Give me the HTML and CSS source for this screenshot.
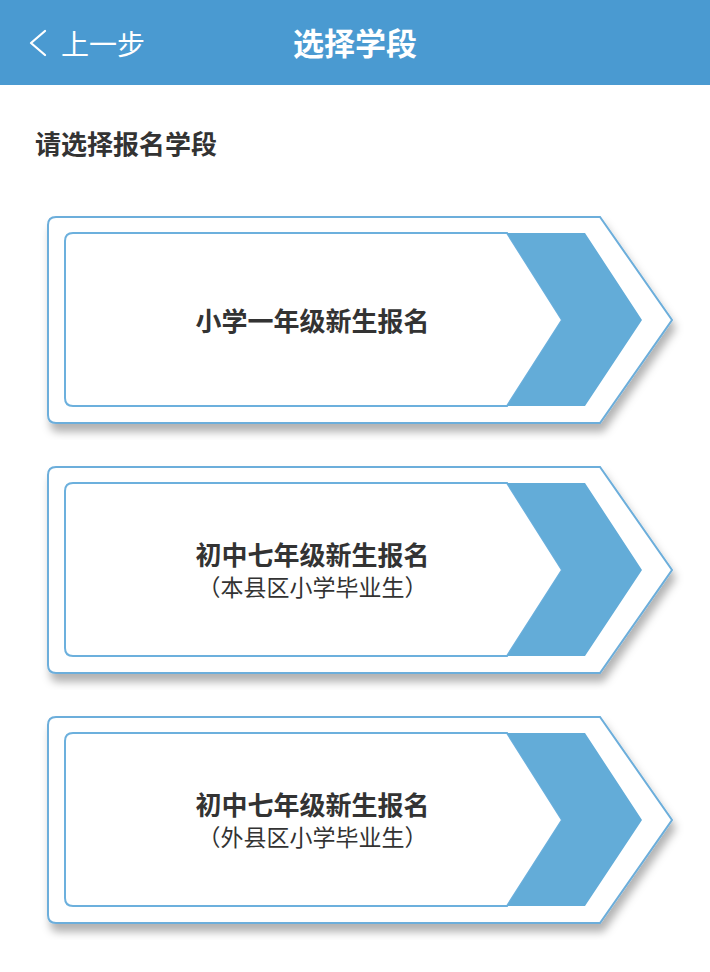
FILE: index.html
```html
<!DOCTYPE html>
<html lang="zh-CN">
<head>
<meta charset="utf-8">
<title>选择学段</title>
<link rel="stylesheet" href="styles.css">
</head>
<body>
<header class="topbar">
  <div class="back">
    <svg class="back-icon" width="20" height="30" viewBox="0 0 20 30"><path d="M17 3 L3 15 L17 27" fill="none" stroke="#fff" stroke-width="2.3" stroke-linecap="round" stroke-linejoin="round"/></svg>
    <span class="back-text">上一步</span>
  </div>
  <h1 class="title">选择学段</h1>
  <div class="spacer"></div>
</header>
<main class="content">
  <p class="label">请选择报名学段</p>
  <div class="cards">
    <div class="card">
      <svg class="card-bg" viewBox="0 0 650 230" width="650" height="230">
        <defs>
          <filter id="sh1" x="-5%" y="-10%" width="115%" height="130%"><feDropShadow dx="3" dy="8" stdDeviation="4" flood-color="#000" flood-opacity="0.3"/></filter>
        </defs>
        <path d="M16 7 L560 7 L632 110 L560 213 L16 213 Q8 213 8 205 L8 15 Q8 7 16 7 Z" fill="#fff" stroke="#6caedb" stroke-width="2" filter="url(#sh1)"/>
        <path d="M33 23 L467 23 L522 110 L467 196 L33 196 Q25 196 25 188 L25 31 Q25 23 33 23 Z" fill="#fff" stroke="#6cb0dd" stroke-width="2"/>
        <path d="M467 23 L545 23 L602 110 L545 196 L467 196 L522 110 Z" fill="#63acd8"/>
      </svg>
      <div class="card-text">
        <span class="card-title">小学一年级新生报名</span>
      </div>
    </div>
    <div class="card">
      <svg class="card-bg" viewBox="0 0 650 230" width="650" height="230">
        <defs>
          <filter id="sh2" x="-5%" y="-10%" width="115%" height="130%"><feDropShadow dx="3" dy="8" stdDeviation="4" flood-color="#000" flood-opacity="0.3"/></filter>
        </defs>
        <path d="M16 7 L560 7 L632 110 L560 213 L16 213 Q8 213 8 205 L8 15 Q8 7 16 7 Z" fill="#fff" stroke="#6caedb" stroke-width="2" filter="url(#sh2)"/>
        <path d="M33 23 L467 23 L522 110 L467 196 L33 196 Q25 196 25 188 L25 31 Q25 23 33 23 Z" fill="#fff" stroke="#6cb0dd" stroke-width="2"/>
        <path d="M467 23 L545 23 L602 110 L545 196 L467 196 L522 110 Z" fill="#63acd8"/>
      </svg>
      <div class="card-text">
        <span class="card-title">初中七年级新生报名</span>
        <span class="card-sub">（本县区小学毕业生）</span>
      </div>
    </div>
    <div class="card">
      <svg class="card-bg" viewBox="0 0 650 230" width="650" height="230">
        <defs>
          <filter id="sh3" x="-5%" y="-10%" width="115%" height="130%"><feDropShadow dx="3" dy="8" stdDeviation="4" flood-color="#000" flood-opacity="0.3"/></filter>
        </defs>
        <path d="M16 7 L560 7 L632 110 L560 213 L16 213 Q8 213 8 205 L8 15 Q8 7 16 7 Z" fill="#fff" stroke="#6caedb" stroke-width="2" filter="url(#sh3)"/>
        <path d="M33 23 L467 23 L522 110 L467 196 L33 196 Q25 196 25 188 L25 31 Q25 23 33 23 Z" fill="#fff" stroke="#6cb0dd" stroke-width="2"/>
        <path d="M467 23 L545 23 L602 110 L545 196 L467 196 L522 110 Z" fill="#63acd8"/>
      </svg>
      <div class="card-text">
        <span class="card-title">初中七年级新生报名</span>
        <span class="card-sub">（外县区小学毕业生）</span>
      </div>
    </div>
  </div>
</main>
</body>
</html>
```
FILE: styles.css
```css
* { box-sizing: border-box; }
html, body { margin: 0; padding: 0; background: #fff; }
body {
  font-family: "Noto Sans CJK SC", "Noto Sans", sans-serif;
  color: #333;
  width: 710px;
}
.topbar {
  height: 85px;
  background: #4a9ad1;
  display: grid;
  grid-template-columns: 1fr auto 1fr;
  align-items: center;
  color: #fff;
}
.back {
  display: flex;
  align-items: center;
  padding-left: 28px;
}
.back-icon { display: block; margin-right: 13px; margin-top: 1px; }
.back-text {
  font-size: 28px;
  line-height: 1;
}
.title {
  margin: 0;
  font-size: 31px;
  font-weight: 700;
  line-height: 1;
  margin-top: -2px;
}
.content { padding: 0; }
.label {
  margin: 43px 0 0 35px;
  font-size: 26px;
  font-weight: 700;
  line-height: 30px;
  color: #333;
}
.cards {
  margin-top: 52px;
  margin-left: 40px;
  display: flex;
  flex-direction: column;
  gap: 20px;
}
.card {
  position: relative;
  width: 650px;
  height: 230px;
}
.card-bg {
  position: absolute;
  left: 0;
  top: 0;
  display: block;
}
.card-text {
  position: relative;
  margin-left: 25px;
  margin-top: 23px;
  width: 495px;
  height: 173px;
  display: flex;
  flex-direction: column;
  align-items: center;
  justify-content: center;
}
.card-title {
  font-size: 26px;
  font-weight: 700;
  line-height: 33px;
  color: #333;
}
.card-sub {
  font-size: 23px;
  line-height: 33px;
  color: #333;
}
```
